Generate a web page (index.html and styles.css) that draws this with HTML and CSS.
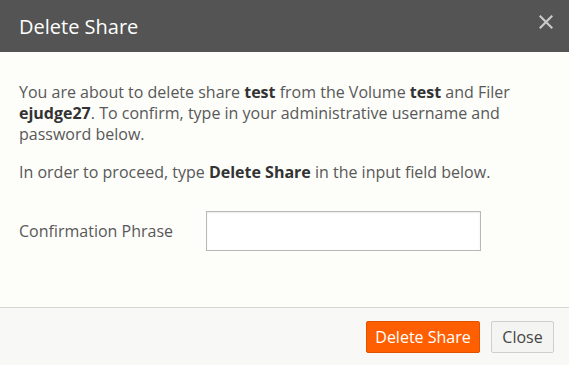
FILE: index.html
```html
<!DOCTYPE html>
<html lang="en">
<head>
    <meta charset="utf-8"/>
    <title>Delete Share</title>
    <link rel="stylesheet" href="styles.css">
</head>
<body>
<div class="modal">
    <div class="modal-header">
        <h1 class="modal-title">Delete Share</h1>
        <button class="close-x" type="button" aria-label="Close">
            <svg width="14" height="14" viewBox="0 0 14 14">
                <path d="M1.5 1.5 L12.5 12.5 M12.5 1.5 L1.5 12.5" stroke="#c9c9c9" stroke-width="2.2" stroke-linecap="square"/>
            </svg>
        </button>
    </div>

    <div class="modal-body">
        <p>You are about to delete share <b>test</b> from the Volume <b>test</b> and Filer <b>ejudge27</b>. To confirm, type in your administrative username and password below.</p>
        <p>In order to proceed, type <b>Delete Share</b> in the input field below.</p>

        <div class="form-row">
            <label class="form-label" for="phrase">Confirmation Phrase</label>
            <input id="phrase" class="form-input" type="text"/>
        </div>
    </div>

    <div class="modal-footer">
        <button class="btn btn-danger" type="button">Delete Share</button>
        <button class="btn btn-default" type="button">Close</button>
    </div>
</div>
</body>
</html>
```

FILE: styles.css
```css
html, body {
    margin: 0;
    padding: 0;
}

body {
    font-family: "Open Sans", "Liberation Sans", sans-serif;
    background-color: #fdfdfa;
    color: #585858;
}

.modal {
    width: 569px;
    height: 365px;
    display: flex;
    flex-direction: column;
}

.modal-header {
    height: 52px;
    background-color: #535453;
    display: flex;
    align-items: center;
    justify-content: space-between;
    padding: 0 16px 0 19px;
    box-sizing: border-box;
}

.modal-title {
    margin: 0;
    font-size: 20px;
    font-weight: normal;
    color: #fff;
}

.close-x {
    background: none;
    border: none;
    padding: 0;
    width: 14px;
    height: 14px;
    margin-top: -8px;
    cursor: pointer;
}

.close-x svg {
    display: block;
}

.modal-body {
    flex: 1;
    padding: 30px 19px 0 19px;
    font-size: 16px;
    line-height: 21px;
}

.modal-body p {
    margin: 0 0 17px 0;
}

.modal-body b {
    color: #333;
}

.form-row {
    display: flex;
    align-items: center;
    margin-top: 28px;
}

.form-label {
    width: 187px;
}

.form-input {
    width: 275px;
    height: 40px;
    box-sizing: border-box;
    border: 1px solid #b8b8b6;
    background-color: #fff;
    box-shadow: inset 0 1px 2px rgba(0, 0, 0, 0.08);
    font-family: inherit;
    font-size: 16px;
    padding: 0 8px;
}

.modal-footer {
    height: 57px;
    border-top: 1px solid #d6d6d4;
    background-color: #f8f8f6;
    display: flex;
    justify-content: flex-end;
    align-items: center;
    gap: 11px;
    padding: 0 15px;
}

.btn {
    height: 32px;
    padding: 0;
    font-family: inherit;
    font-size: 16px;
    white-space: nowrap;
    border-radius: 2px;
    cursor: pointer;
}

.btn-danger {
    width: 114px;
    background-color: #ff5f00;
    border: 1px solid #e05200;
    color: #fff;
}

.btn-default {
    width: 63px;
    background-color: #f4f4f2;
    border: 1px solid #cfcfcd;
    color: #444;
}
```
